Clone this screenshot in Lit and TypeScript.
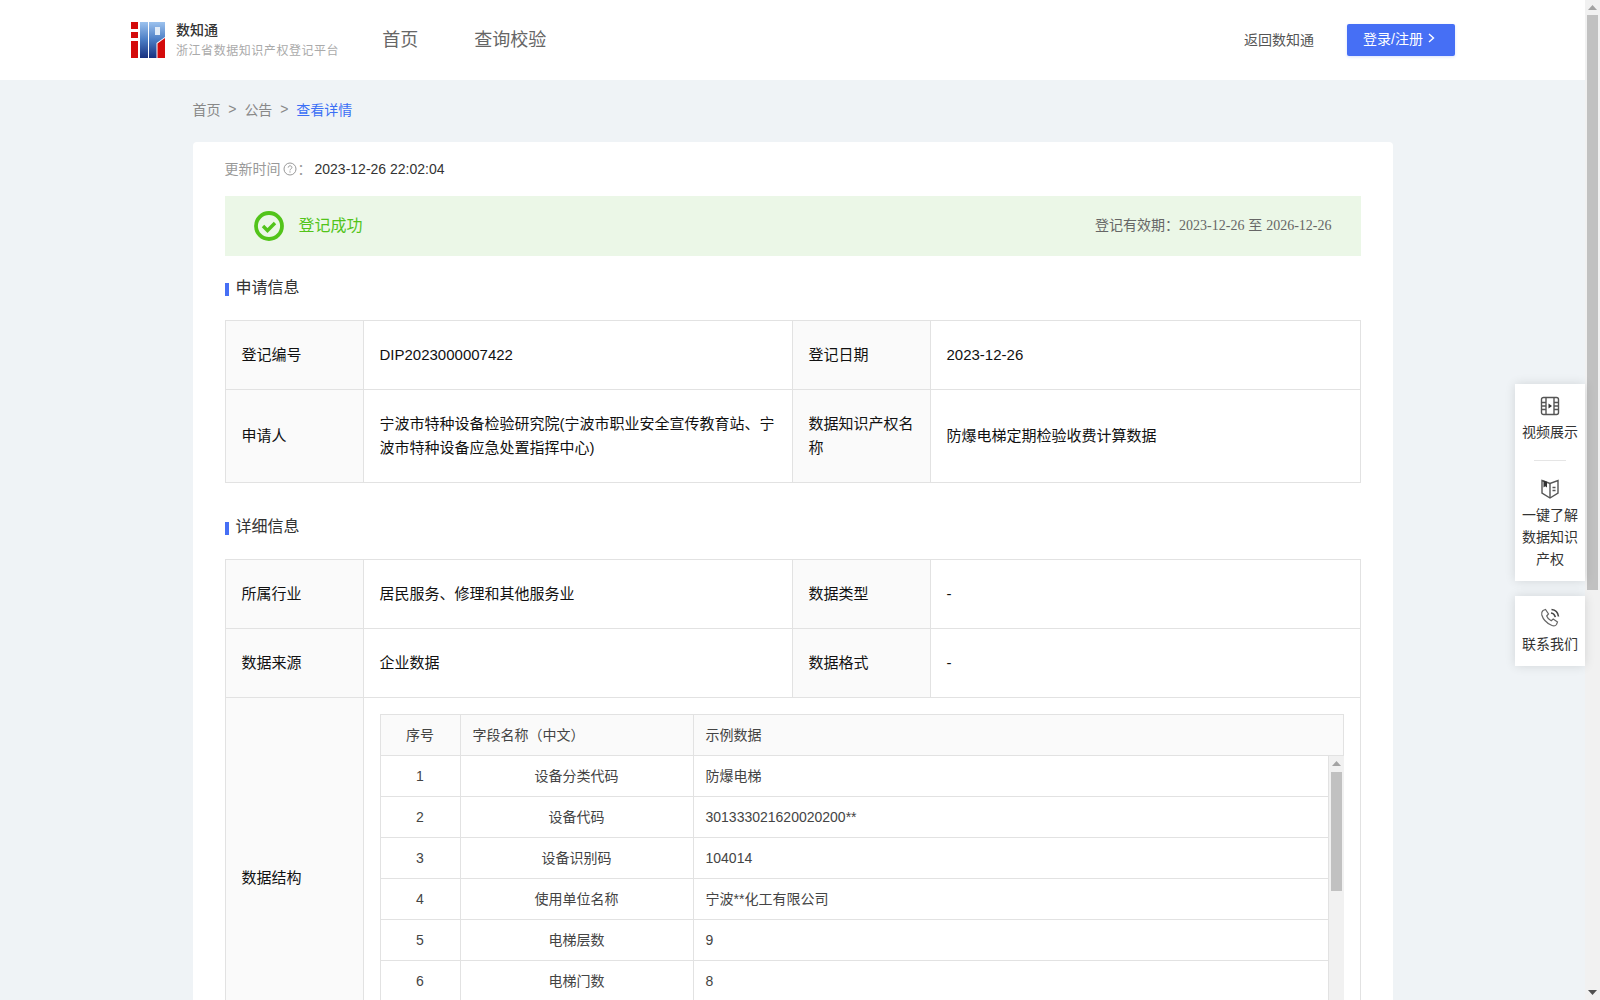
import { LitElement, html, css, svg } from 'lit';
import { customElement } from 'lit/decorators.js';

const basicRows = [
  { a: '登记编号', b: 'DIP2023000007422', c: '登记日期', d: '2023-12-26' },
  {
    a: '申请人',
    b: '宁波市特种设备检验研究院(宁波市职业安全宣传教育站、宁波市特种设备应急处置指挥中心)',
    c: '数据知识产权名称',
    d: '防爆电梯定期检验收费计算数据',
  },
];

const detailRows = [
  { a: '所属行业', b: '居民服务、修理和其他服务业', c: '数据类型', d: '-' },
  { a: '数据来源', b: '企业数据', c: '数据格式', d: '-' },
];

const fields = [
  ['1', '设备分类代码', '防爆电梯'],
  ['2', '设备代码', '301333021620020200**'],
  ['3', '设备识别码', '104014'],
  ['4', '使用单位名称', '宁波**化工有限公司'],
  ['5', '电梯层数', '9'],
  ['6', '电梯门数', '8'],
];

const logo = svg`
  <defs>
    <linearGradient id="lg" x1="0" y1="0" x2="0" y2="1">
      <stop offset="0" stop-color="#9cc2ee" />
      <stop offset="0.5" stop-color="#4a7cc4" />
      <stop offset="1" stop-color="#17307f" />
    </linearGradient>
  </defs>
  <path d="M0 0h7v7H0zM0 10h7v6H0zM0 19h7v17H0z" fill="#d40b0b" />
  <rect x="9" width="8" height="36" fill="url(#lg)" />
  <path d="M18 0h16v15l-8.500 6v15H18z" fill="url(#lg)" />
  <rect x="24" y="5" width="5" height="8" fill="#e2ecf8" />
  <path d="M26.500 36V21.500L34 16v20z" fill="#d40b0b" />
`;

@customElement('app-root')
export class AppRoot extends LitElement {
  static styles = css`
    :host {
      display: flex;
      height: 1000px;
      overflow: hidden;
      position: relative;
      background: #eff3f6;
      font-family: "Liberation Sans", "Noto Sans CJK SC", sans-serif;
      font-size: 14px;
      color: #333;
    }

    .page {
      flex: 1;
      min-width: 0;
      overflow: hidden;
    }

    /* header */
    .header {
      height: 80px;
      background: #fff;
      display: flex;
      align-items: center;
      padding: 0 130px 0 131px;
    }
    .logo {
      display: flex;
      align-items: center;
      gap: 11px;
      margin-right: 43px;
    }
    .logo svg {
      display: block;
    }
    .logo-name {
      font-size: 14px;
      line-height: 20px;
      font-weight: 500;
      color: #333;
    }
    .logo-sub {
      font-size: 12px;
      line-height: 18px;
      margin-top: 2px;
      letter-spacing: 0.55px;
      color: #aaa;
    }
    .nav {
      display: flex;
      gap: 56px;
      padding-bottom: 4px;
      font-size: 18px;
      color: #666;
    }
    .right {
      margin-left: auto;
      display: flex;
      align-items: center;
      gap: 33px;
      color: #555;
    }
    .back {
      padding-bottom: 2px;
    }
    .login {
      width: 108px;
      height: 32px;
      box-sizing: border-box;
      padding: 0 4px 5px 0;
      display: flex;
      align-items: center;
      justify-content: center;
      gap: 5px;
      background: #466ff5;
      border-radius: 2px;
      box-shadow: 0 1px 3px rgba(70, 111, 245, 0.2);
      color: #fff;
    }

    /* breadcrumb */
    .crumbs {
      width: 1200px;
      box-sizing: border-box;
      margin: 0 auto;
      height: 62px;
      padding-bottom: 4px;
      display: flex;
      align-items: center;
      gap: 7.850px;
      color: #888;
    }
    .crumbs .now {
      color: #3b6ff5;
    }

    /* card */
    .card {
      width: 1200px;
      box-sizing: border-box;
      margin: 0 auto;
      padding: 16px 32px;
      background: #fff;
      border-radius: 4px 4px 0 0;
    }
    .updated {
      height: 20px;
      display: flex;
      align-items: center;
      color: #999;
      margin-bottom: 18px;
    }
    .updated svg {
      margin: 2px 1px 0 2px;
    }
    .updated .time {
      color: #333;
      margin-left: 3px;
      padding-top: 1px;
    }
    .banner {
      height: 60px;
      display: flex;
      align-items: center;
      background: #ebf7e7;
      padding: 0 29px;
    }
    .banner svg {
      margin-right: 15px;
    }
    .banner .state {
      font-size: 16px;
      padding-bottom: 4px;
      color: #52c41a;
    }
    .banner .period {
      margin-left: auto;
      padding-bottom: 4px;
      color: #666;
    }
    .banner .period b {
      font-weight: 400;
      font-family: "Liberation Serif", "Noto Sans CJK SC", serif;
    }
    .title {
      display: flex;
      align-items: center;
      gap: 7px;
      font-size: 16px;
      line-height: 24px;
      color: #333;
      margin: 20px 0;
    }
    .title::before {
      content: '';
      width: 4px;
      height: 13px;
      margin-top: 3px;
      background: #466ff5;
    }
    .grid {
      display: grid;
      grid-template-columns: 137px 428px 137px 1fr;
      gap: 1px;
      background: #e2e2e2;
      border: 1px solid #e2e2e2;
      font-size: 15px;
      color: #111;
    }
    .grid + .title {
      margin: 32px 0 20px;
    }
    .cell {
      padding: 22px 16px;
      line-height: 24px;
      background: #fff;
      display: flex;
      align-items: center;
      min-width: 0;
    }
    .cell.label {
      background: #fafafa;
    }
    .cell.wide {
      grid-column: 2 / 5;
      display: block;
      padding: 16px;
      height: 360px;
      overflow: hidden;
      box-sizing: border-box;
    }

    /* nested field table */
    .fields {
      border: 1px solid #e2e2e2;
      font-size: 14px;
      color: #444;
    }
    .fields .row {
      display: grid;
      grid-template-columns: 80px 233px 1fr;
      height: 40px;
      line-height: 40px;
      border-bottom: 1px solid #e2e2e2;
    }
    .fields .row > div {
      padding: 0 12px;
      border-right: 1px solid #e2e2e2;
    }
    .fields .row > div:last-child {
      border-right: 0;
    }
    .fields .head {
      background: #fafafa;
    }
    .fields .center {
      text-align: center;
    }
    .field-body {
      display: flex;
      height: 285px;
      margin-right: -1px;
      overflow: hidden;
    }
    .field-rows {
      flex: 1;
      min-width: 0;
      border-right: 1px solid #e2e2e2;
    }

    /* scrollbars are drawn, since the real ones depend on the host browser */
    .bar {
      flex: none;
      width: 15px;
      display: flex;
      flex-direction: column;
      background: #f1f1f1;
    }
    .arrow {
      flex: none;
      height: 15px;
      display: flex;
      align-items: center;
      justify-content: center;
    }
    .thumb {
      flex: none;
      margin: 0 2px;
      background: #c1c1c1;
    }
    .spacer {
      flex: 1;
    }

    /* floating side tools */
    .side {
      position: absolute;
      top: 384px;
      right: 15px;
      width: 70px;
      display: flex;
      flex-direction: column;
      gap: 15px;
    }
    .box {
      background: #fff;
      box-shadow: 0 0 10px rgba(0, 0, 0, 0.12);
      text-align: center;
      line-height: 22px;
      color: #333;
      padding: 12px 6px 11px;
    }
    .box svg {
      display: block;
      margin: 0 auto 5px;
    }
    .box hr {
      width: 32px;
      height: 1px;
      margin: 17px auto 18px;
      border: 0;
      background: #e5e5e5;
    }
  `;

  renderGridRows(rows: typeof basicRows) {
    return rows.map(
      (r) => html`
        <div class="cell label">${r.a}</div>
        <div class="cell">${r.b}</div>
        <div class="cell label">${r.c}</div>
        <div class="cell">${r.d}</div>
      `
    );
  }

  renderScrollbar(thumbTop: number, thumbHeight: number) {
    return html`
      <div class="bar">
        <div class="arrow">
          <svg width="9" height="5" viewBox="0 0 9 5"><path d="M4.500 0L9 5H0z" fill="#a3a3a3" /></svg>
        </div>
        <div class="thumb" style="margin-top:${thumbTop}px;height:${thumbHeight}px"></div>
        <div class="spacer"></div>
        <div class="arrow">
          <svg width="9" height="5" viewBox="0 0 9 5"><path d="M0 0h9L4.500 5z" fill="#505050" /></svg>
        </div>
      </div>
    `;
  }

  render() {
    return html`
      <div class="page">
        <div class="header">
          <div class="logo">
            <svg width="34" height="36" viewBox="0 0 34 36">${logo}</svg>
            <div>
              <div class="logo-name">数知通</div>
              <div class="logo-sub">浙江省数据知识产权登记平台</div>
            </div>
          </div>
          <div class="nav"><span>首页</span><span>查询校验</span></div>
          <div class="right">
            <span class="back">返回数知通</span>
            <div class="login">
              登录/注册
              <svg width="7" height="10" viewBox="0 0 7 10" fill="none" stroke="#fff" stroke-width="1.400">
                <path d="M1 1l4.500 4L1 9" />
              </svg>
            </div>
          </div>
        </div>

        <div class="crumbs">
          <span>首页</span><span>&gt;</span><span>公告</span><span>&gt;</span>
          <span class="now">查看详情</span>
        </div>

        <div class="card">
          <div class="updated">
            更新时间
            <svg width="14" height="14" viewBox="0 0 14 14" fill="none" stroke="#999">
              <circle cx="7" cy="7" r="6" />
              <path d="M5.200 5.600c0-2.400 3.700-2.400 3.700-.1 0 1.400-1.900 1.400-1.900 2.900" />
              <path d="M7 9.300v1.300" />
            </svg>
            ：<span class="time">2023-12-26 22:02:04</span>
          </div>

          <div class="banner">
            <svg width="30" height="30" viewBox="0 0 30 30" fill="none" stroke="#52c41a">
              <circle cx="15" cy="15" r="13" stroke-width="3.800" />
              <path d="M9 15l4.500 4.500 7.500-7.500" stroke-width="3.400" />
            </svg>
            <span class="state">登记成功</span>
            <span class="period">登记有效期：<b>2023-12-26</b> 至 <b>2026-12-26</b></span>
          </div>

          <div class="title">申请信息</div>
          <div class="grid">${this.renderGridRows(basicRows)}</div>

          <div class="title">详细信息</div>
          <div class="grid">
            ${this.renderGridRows(detailRows)}
            <div class="cell label">数据结构</div>
            <div class="cell wide">
              <div class="fields">
                <div class="row head">
                  <div class="center">序号</div>
                  <div>字段名称（中文）</div>
                  <div>示例数据</div>
                </div>
                <div class="field-body">
                  <div class="field-rows">
                    ${fields.map(
                      (f) => html`
                        <div class="row">
                          <div class="center">${f[0]}</div>
                          <div class="center">${f[1]}</div>
                          <div>${f[2]}</div>
                        </div>
                      `
                    )}
                  </div>
                  ${this.renderScrollbar(1, 119)}
                </div>
              </div>
            </div>
          </div>
        </div>
      </div>

      ${this.renderScrollbar(0, 575)}

      <div class="side">
        <div class="box">
          <svg width="20" height="20" viewBox="0 0 20 20" fill="none" stroke="#555" stroke-width="1.400">
            <rect x="1.500" y="1.500" width="17" height="17" rx="2" />
            <path d="M6 1.500v17M14 1.500v17M1.500 6.500H6M1.500 10H6M1.500 13.500H6M14 6.500h4.500M14 10h4.500M14 13.500h4.500" />
            <path d="M8.500 7.500l3.500 2.500-3.500 2.500z" fill="#333" stroke="none" />
          </svg>
          视频展示
          <hr />
          <svg width="20" height="20" viewBox="0 0 20 20" fill="none" stroke="#555" stroke-width="1.400">
            <path d="M2 1.500l8 3 8-3V14l-8 5-8-5z" />
            <path d="M10 4.500V19M12.500 8.500h3M12.500 11.500h3" />
            <path d="M3.500 1.500l3.500 1.300V8.500L5.200 7.300 3.500 8.500z" fill="#333" stroke="none" />
          </svg>
          一键了解数据知识产权
        </div>
        <div class="box">
          <svg width="20" height="20" viewBox="0 0 20 20" fill="none" stroke="#666" stroke-width="1.200">
            <path d="M3 2.500l2.500-1 3 4.500-1.800 2c.800 2.300 2.300 3.800 4.500 4.800l2-1.800 4.300 3-1 2.500c-1 1.500-3 1.800-5 .800C6.500 15 3 11 1.800 7 1.300 5 1.800 3.500 3 2.500z" />
            <path d="M11 5c2.200.300 3.800 1.900 4.300 4.200M11.500 1.500c3.800.300 6.500 3.200 7 7" stroke="#444" stroke-width="1.600" />
          </svg>
          联系我们
        </div>
      </div>
    `;
  }
}
